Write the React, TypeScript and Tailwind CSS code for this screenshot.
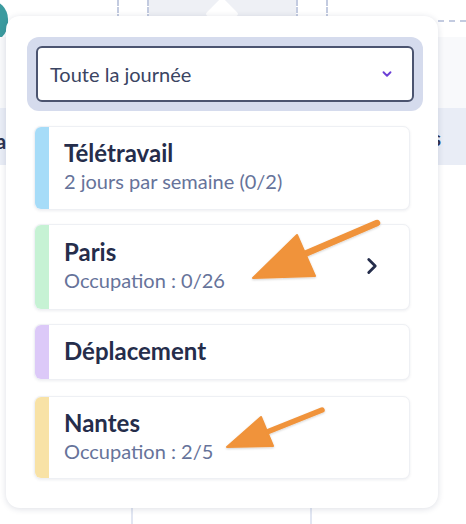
import { ChevronDown, ChevronRight } from "lucide-react";

// ─── Data ─────────────────────────────────────────────────────────────────────
const PLACES = [
  { title: "Télétravail", sub: "2 jours par semaine (0/2)", stripe: "bg-[#a6dcf8]", h: "h-[84px]", mt: "mt-[15px]", chevron: false },
  { title: "Paris", sub: "Occupation : 0/26", stripe: "bg-[#c6f2d4]", h: "h-[86px]", mt: "mt-[14px]", chevron: true },
  { title: "Déplacement", sub: "", stripe: "bg-[#dcc9f8]", h: "h-[56px]", mt: "mt-[14px]", chevron: false },
  { title: "Nantes", sub: "Occupation : 2/5", stripe: "bg-[#f8e2a6]", h: "h-[83px]", mt: "mt-[16px]", chevron: false },
];

// ─── Orange annotation arrows ─────────────────────────────────────────────────
function Arrows() {
  return (
    <svg className="pointer-events-none absolute inset-0" width="466" height="524" viewBox="0 0 466 524">
      <defs>
        <filter id="sh" x="-20%" y="-20%" width="140%" height="140%">
          <feDropShadow dx="0" dy="1" stdDeviation="1.2" floodColor="#000" floodOpacity="0.18" />
        </filter>
      </defs>
      <g fill="#f0933a" stroke="#f0933a" strokeLinecap="round" strokeLinejoin="round" filter="url(#sh)">
        <path d="M377 223 L300 256" strokeWidth="6.5" fill="none" />
        <path d="M253 278 L297 235 L315 276 Z" strokeWidth="2" />
        <path d="M322 410 L262 434" strokeWidth="5.5" fill="none" />
        <path d="M227 447 L261 417 L273 446 Z" strokeWidth="2" />
      </g>
    </svg>
  );
}

// ─── Calendar behind the popover ──────────────────────────────────────────────
function Backdrop() {
  return (
    <div className="flex h-full flex-col">
      <div className="flex h-[37px] shrink-0">
        <div className="ml-[-30px] h-[42px] w-[38px] shrink-0 rounded-full bg-[#3b9b9f]" />
        <div className="ml-[109px] h-[20px] border-l-2 border-dashed border-[#c3cbe0]" />
        <div className="ml-[28px] flex h-[20px] w-[151px] border-x-2 border-dashed border-[#c3cbe0]">
          <div className="h-[16px] flex-1 bg-[#eef0f5]" />
        </div>
        <div className="ml-[28px] h-[20px] border-l-2 border-dashed border-[#c3cbe0]" />
        <div className="flex-1" />
        <div className="mt-[20px] w-[28px] border-t-2 border-dashed border-[#c3cbe0]" />
      </div>
      <div className="h-[71px] shrink-0 bg-[#f8f9fb]" />
      <div className="flex h-[57px] shrink-0 items-center justify-between overflow-hidden bg-[#e9edf6] pt-[8px]">
        <span className="ml-[-4px] text-[20px] font-bold text-[#2c3450]">a</span>
        <span className="mr-[25px] mt-[-6px] text-[20px] font-bold text-[#2c3450]">s</span>
      </div>
      <div className="flex-1" />
      <div className="flex h-[16px] shrink-0">
        <div className="ml-[131px] border-l-2 border-[#e1e6f2]" />
        <div className="ml-[177px] border-l-2 border-[#e1e6f2]" />
      </div>
    </div>
  );
}

// ─── Page ─────────────────────────────────────────────────────────────────────
export default function App() {
  return (
    <div className="relative h-[524px] w-[466px] overflow-hidden bg-white font-['Lato',sans-serif]">
      <Backdrop />

      {/* Popover caret */}
      <div className="absolute left-[210px] top-[2px] h-[24px] w-[24px] rotate-45 rounded-[3px] bg-white" />

      {/* Popover */}
      <div className="absolute left-[6px] top-[16px] flex h-[492px] w-[432px] flex-col rounded-[14px] bg-white px-[28px] pt-[21px] shadow-[0_1px_6px_rgba(30,40,80,0.15)]">
        <div className="ml-[-7px] mr-[-13px] rounded-[12px] bg-[#d5dbed] p-[9px]">
          <div className="flex h-[56px] items-center justify-between rounded-[6px] border-2 border-[#4b5470] bg-white pl-[12px] pr-[18px]">
            <span className="text-[20px] text-[#3a4462]">Toute la journée</span>
            <ChevronDown className="h-[14px] w-[14px] text-[#6b3fd6]" strokeWidth={3.2} />
          </div>
        </div>

        {PLACES.map((p) => (
          <div
            key={p.title}
            className={`${p.mt} ${p.h} flex shrink-0 overflow-hidden rounded-[7px] border border-[#eef0f4] bg-white shadow-[0_1px_3px_rgba(30,40,80,0.08)]`}
          >
            <div className={`w-[14px] shrink-0 ${p.stripe}`} />
            <div className="flex flex-1 items-center justify-between pb-[3px] pl-[15px] pr-[30px]">
              <div className="flex flex-col">
                <span className="text-[24px] font-bold leading-[26px] text-[#252d4b]">{p.title}</span>
                {p.sub && <span className="mt-[3px] text-[20px] leading-[24px] text-[#66739a]">{p.sub}</span>}
              </div>
              {p.chevron && <ChevronRight className="mr-[-6px] h-[26px] w-[26px] text-[#252d4b]" strokeWidth={2.6} />}
            </div>
          </div>
        ))}
      </div>

      <Arrows />
    </div>
  );
}
